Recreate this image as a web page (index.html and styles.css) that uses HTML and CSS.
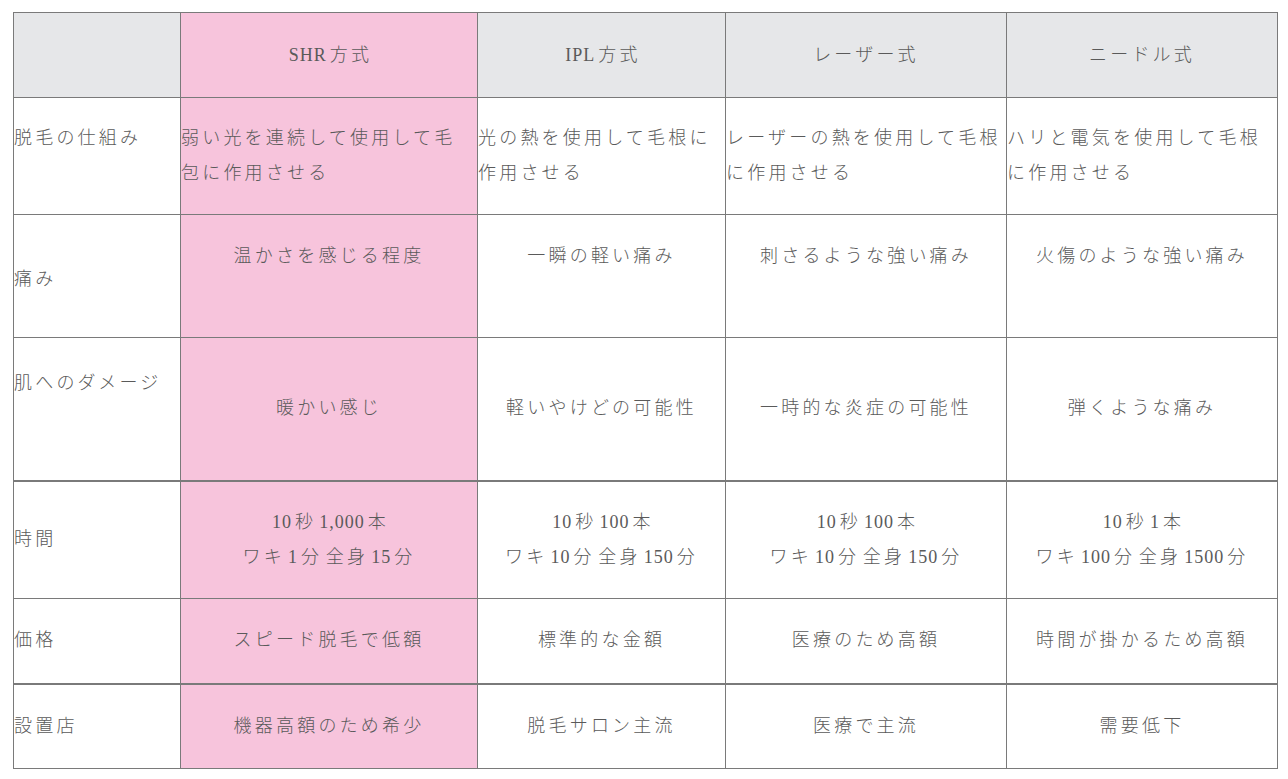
FILE: index.html
```html
<!DOCTYPE html>
<html lang="ja">
<head>
<meta charset="utf-8">
<title>脱毛方式の比較</title>
<link rel="stylesheet" href="styles.css">
</head>
<body>
<div class="wrap">
<table class="compare">
  <colgroup>
    <col class="c-label">
    <col class="c-shr">
    <col class="c-ipl">
    <col class="c-laser">
    <col class="c-needle">
  </colgroup>
  <thead>
    <tr class="r-head">
      <th class="label"></th>
      <th class="shr"><span class="lat">SHR</span>方式</th>
      <th><span class="lat">IPL</span>方式</th>
      <th>レーザー式</th>
      <th>ニードル式</th>
    </tr>
  </thead>
  <tbody>
    <tr class="r1 left">
      <td class="label pb35">脱毛の仕組み</td>
      <td class="shr">弱い光を連続して使用して毛包に作用させる</td>
      <td>光の熱を使用して毛根に作用させる</td>
      <td>レーザーの熱を使用して毛根に作用させる</td>
      <td>ハリと電気を使用して毛根に作用させる</td>
    </tr>
    <tr class="r2">
      <td class="label pt7">痛み</td>
      <td class="shr pb40">温かさを感じる程度</td>
      <td class="pb40">一瞬の軽い痛み</td>
      <td class="pb40">刺さるような強い痛み</td>
      <td class="pb40">火傷のような強い痛み</td>
    </tr>
    <tr class="r3">
      <td class="label pb50">肌へのダメージ</td>
      <td class="shr">暖かい感じ</td>
      <td>軽いやけどの可能性</td>
      <td>一時的な炎症の可能性</td>
      <td>弾くような痛み</td>
    </tr>
    <tr class="r4 thick">
      <td class="label">時間</td>
      <td class="shr"><span class="lat">10</span>秒<span class="lat">1,000</span>本<br>ワキ<span class="lat">1</span>分 全身<span class="lat">15</span>分</td>
      <td><span class="lat">10</span>秒<span class="lat">100</span>本<br>ワキ<span class="lat">10</span>分 全身<span class="lat">150</span>分</td>
      <td><span class="lat">10</span>秒<span class="lat">100</span>本<br>ワキ<span class="lat">10</span>分 全身<span class="lat">150</span>分</td>
      <td><span class="lat">10</span>秒<span class="lat">1</span>本<br>ワキ<span class="lat">100</span>分 全身<span class="lat">1500</span>分</td>
    </tr>
    <tr class="r5">
      <td class="label">価格</td>
      <td class="shr">スピード脱毛で低額</td>
      <td>標準的な金額</td>
      <td>医療のため高額</td>
      <td>時間が掛かるため高額</td>
    </tr>
    <tr class="r6 thick">
      <td class="label">設置店</td>
      <td class="shr">機器高額のため希少</td>
      <td>脱毛サロン主流</td>
      <td>医療で主流</td>
      <td>需要低下</td>
    </tr>
  </tbody>
</table>
</div>
</body>
</html>
```

FILE: styles.css
```css
html, body {
  margin: 0;
  padding: 0;
  background: #ffffff;
}

.wrap {
  padding: 12px 12px 0 13px;
}

.compare {
  border-collapse: collapse;
  table-layout: fixed;
  width: 1264px;
  font-family: "Liberation Serif", "Noto Sans CJK JP", serif;
  font-size: 18px;
  font-weight: 300;
  letter-spacing: 3.2px;
  word-spacing: -4px;
  line-height: 35px;
  color: #5a5a5a;
}

.c-label { width: 167px; }
.c-shr { width: 297px; }
.c-ipl { width: 248px; }
.c-laser { width: 281px; }
.c-needle { width: 271px; }

.compare th,
.compare td {
  border: 1px solid #7a7a7a;
  padding: 0;
  vertical-align: middle;
  text-align: center;
  font-weight: 300;
}

.compare th {
  background: #e6e7e9;
}

.compare td.label {
  text-align: left;
}

.compare .shr {
  background: #f7c4dc;
}

.lat {
  letter-spacing: 1px;
  margin: 0 3px;
}

.r-head { height: 85px; }
.r1 { height: 117px; }
.r2 { height: 123px; }
.r3 { height: 143px; }
.r4 { height: 118px; }
.r5 { height: 85px; }
.r6 { height: 85px; }

.thick td {
  border-top: 2px solid #7a7a7a;
}

.left td {
  text-align: left;
  padding-right: 2px;
}

.compare td.pb35 { padding-bottom: 35px; }
.compare td.pb40 { padding-bottom: 40px; }
.compare td.pb50 { padding-bottom: 50px; }
.compare td.pt7 { padding-top: 7px; }
```
